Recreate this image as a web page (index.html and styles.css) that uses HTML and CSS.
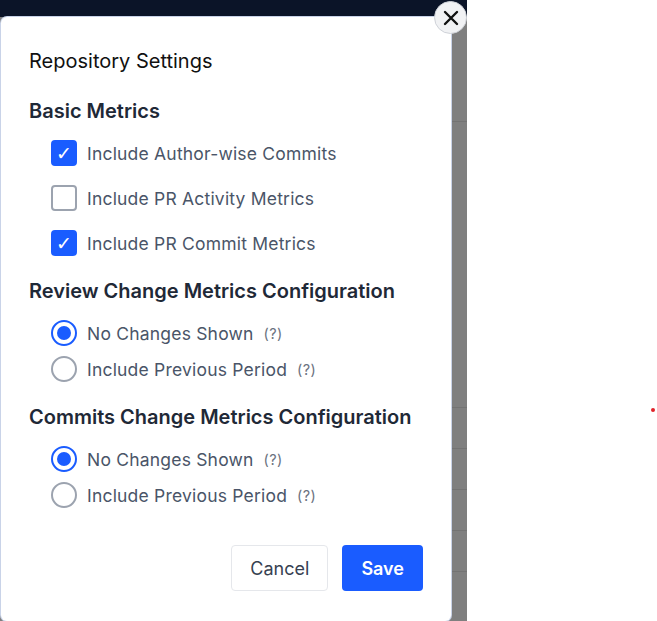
FILE: index.html
```html
<!DOCTYPE html>
<html lang="en">
<head>
    <meta charset="UTF-8">
    <meta name="viewport" content="width=device-width, initial-scale=1.0">
    <title>Repository Settings</title>
    <link rel="stylesheet" href="styles.css">
</head>
<body>

    <div class="frame">
        <div class="app">
            <div class="topbar"></div>
            <div class="content">
                <div class="row"></div>
                <div class="row tall"></div>
                <div class="row"></div>
                <div class="row"></div>
                <div class="row"></div>
                <div class="row"></div>
            </div>
        </div>

        <div class="overlay">
            <div class="modal">
                <button class="close" aria-label="Close">
                    <svg width="16" height="16" viewBox="0 0 16 16">
                        <path d="M2 2 L14 14 M14 2 L2 14" stroke="#111" stroke-width="2.4" stroke-linecap="round"/>
                    </svg>
                </button>

                <h2 class="title">Repository Settings</h2>

                <h3 class="section">Basic Metrics</h3>
                <div class="checks">
                    <label class="check"><span class="box on">&#10003;</span>Include Author-wise Commits</label>
                    <label class="check"><span class="box"></span>Include PR Activity Metrics</label>
                    <label class="check"><span class="box on">&#10003;</span>Include PR Commit Metrics</label>
                </div>

                <h3 class="section">Review Change Metrics Configuration</h3>
                <div class="radios">
                    <label class="radio"><span class="dot on"></span>No Changes Shown <span class="hint">(?)</span></label>
                    <label class="radio"><span class="dot"></span>Include Previous Period <span class="hint">(?)</span></label>
                </div>

                <h3 class="section">Commits Change Metrics Configuration</h3>
                <div class="radios">
                    <label class="radio"><span class="dot on"></span>No Changes Shown <span class="hint">(?)</span></label>
                    <label class="radio"><span class="dot"></span>Include Previous Period <span class="hint">(?)</span></label>
                </div>

                <div class="actions">
                    <button class="btn cancel">Cancel</button>
                    <button class="btn save">Save</button>
                </div>
            </div>
        </div>
    </div>

    <span class="pin"></span>

</body>
</html>
```

FILE: styles.css
```css
body {
    margin: 0;
    font-family: Inter, "Noto Sans", sans-serif;
    background: #fff;
}
.frame {
    position: relative;
    width: 467px;
    height: 621px;
    overflow: hidden;
}
.app {
    height: 100%;
    background: #fff;
}
.topbar {
    height: 17px;
    background: #0b1428;
}
.content {
    padding-top: 64px;
}
.row {
    height: 40px;
    border-bottom: 1px solid #e6e6e6;
}
.row.tall {
    height: 285px;
}
.overlay {
    position: absolute;
    top: 17px;
    left: 0;
    right: 0;
    bottom: 0;
    background: rgba(0, 0, 0, 0.5);
    padding: 0 16px 0 1px;
}
.modal {
    position: relative;
    background: #fff;
    border-radius: 6px;
    box-shadow: 0 0 0 1px #c9d3e8;
    padding: 20px 28px 28px 28px;
    height: 100%;
    box-sizing: border-box;
}
.close {
    position: absolute;
    top: -16px;
    right: -16px;
    width: 33px;
    height: 33px;
    border-radius: 50%;
    border: 1px solid #cfd2d8;
    background: #f1f2f4;
    display: flex;
    align-items: center;
    justify-content: center;
    padding: 0;
}
.title {
    margin: 12px 0 0;
    font-size: 20px;
    font-weight: 400;
    color: #111;
    line-height: 24px;
}
.section {
    margin: 0;
    font-size: 20px;
    font-weight: 600;
    color: #1f2937;
    line-height: 24px;
}
.title + .section {
    margin-top: 26px;
}
.checks {
    display: flex;
    flex-direction: column;
    gap: 19px;
    padding: 17px 0 23px 22px;
}
.check, .radio {
    display: flex;
    align-items: center;
    gap: 10px;
    font-size: 17.5px;
    letter-spacing: 0.2px;
    color: #4a5568;
    height: 26px;
}
.box {
    width: 26px;
    height: 26px;
    box-sizing: border-box;
    border: 2px solid #9ca3af;
    border-radius: 4px;
    display: flex;
    align-items: center;
    justify-content: center;
    color: #fff;
    font-family: "DejaVu Sans", sans-serif;
    font-size: 19px;
    line-height: 1;
}
.box.on {
    background: #1a5cff;
    border-color: #1a5cff;
}
.radios {
    display: flex;
    flex-direction: column;
    gap: 10px;
    padding: 17px 0 23px 22px;
}
.dot {
    width: 26px;
    height: 26px;
    box-sizing: border-box;
    border: 2px solid #9ca3af;
    border-radius: 50%;
    display: flex;
    align-items: center;
    justify-content: center;
}
.dot.on {
    border-color: #1a5cff;
}
.dot.on::after {
    content: "";
    width: 14px;
    height: 14px;
    border-radius: 50%;
    background: #1a5cff;
}
.hint {
    font-size: 14.5px;
    letter-spacing: 0.4px;
    color: #6b7280;
    margin-left: 0;
}
.actions {
    display: flex;
    justify-content: flex-end;
    gap: 14px;
    margin-top: 14px;
}
.btn {
    height: 46px;
    padding: 0 18px;
    font-family: inherit;
    font-size: 18px;
    border-radius: 4px;
}
.cancel {
    background: #fff;
    color: #374151;
    border: 1px solid #e5e7eb;
}
.save {
    background: #1a5cff;
    color: #fff;
    border: none;
    font-weight: 600;
    padding: 0 19px;
}
.pin {
    position: absolute;
    left: 651px;
    top: 408px;
    width: 4px;
    height: 4px;
    border-radius: 50%;
    background: #e0242a;
}
```
